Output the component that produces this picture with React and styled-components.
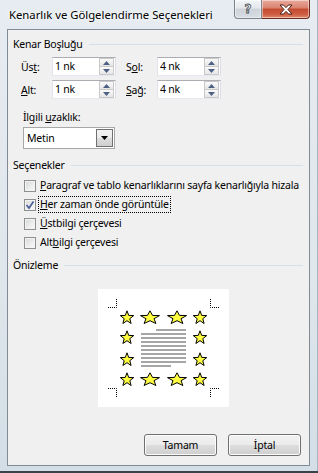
import React from "react";
import styled, { createGlobalStyle } from "styled-components";

const GlobalStyle = createGlobalStyle`
  html, body {
    margin: 0;
    padding: 0;
  }
  body {
    width: 318px;
    height: 473px;
    overflow: hidden;
    background: #3b4148;
    font-family: "Noto Sans", "Open Sans", sans-serif;
    font-size: 10.5px;
    letter-spacing: -0.2px;
    color: #000;
    white-space: nowrap;
  }
`;

const Window = styled.div`
  width: 318px;
  height: 471px;
  box-sizing: border-box;
  display: flex;
  flex-direction: column;
  background: linear-gradient(to bottom, #e6ecf1 0%, #dfe6ec 60%, #d3dee6 100%);
  border-right: 1px solid #a9b4bd;
`;

const TitleBar = styled.div`
  height: 29px;
  display: flex;
  align-items: flex-start;
  justify-content: space-between;
  flex-shrink: 0;
`;

const Title = styled.div`
  padding: 7px 0 0 9px;
  font-size: 11.3px;
  letter-spacing: 0;
  line-height: 16px;
  color: #000;
  text-shadow: 0 0 6px #fff, 0 0 3px #fff;
`;

const CaptionButtons = styled.div`
  display: flex;
  margin-right: 7px;
`;

const CaptionButton = styled.div`
  height: 19px;
  box-sizing: border-box;
  display: flex;
  align-items: center;
  justify-content: center;
  border: 1px solid ${p => (p.$close ? "#6d2a1f" : "#7b848d")};
  border-top: none;
  width: ${p => (p.$close ? "48px" : "28px")};
  border-radius: ${p => (p.$close ? "0 0 4px 0" : "0 0 0 4px")};
  border-left: ${p => (p.$close ? "none" : "1px solid #7b848d")};
  background: ${p =>
    p.$close
      ? "linear-gradient(to bottom, #e9a99b 0%, #d9826f 45%, #c34a30 50%, #cf5e44 80%, #e08c6c 100%)"
      : "linear-gradient(to bottom, #f3f5f7 0%, #e3e7eb 45%, #cdd3d9 50%, #d7dde2 100%)"};
  box-shadow: inset 0 0 0 1px rgba(255, 255, 255, 0.45);
`;

const HelpGlyph = styled.span`
  font-family: "DejaVu Sans", sans-serif;
  font-size: 12px;
  font-weight: bold;
  line-height: 12px;
  color: #f4f4f4;
  -webkit-text-stroke: 0.8px #4a4f55;
`;

const Client = styled.div`
  flex: 1;
  margin: 0 7px 5px 7px;
  border: 1px solid #808b95;
  background: #f0f0f0;
  display: flex;
  flex-direction: column;
  padding: 6px 6px 9px 5px;
  box-sizing: border-box;
`;

const GroupHeader = styled.div`
  display: flex;
  align-items: center;
  gap: 6px;
  line-height: 16px;
  margin-top: ${p => p.$top || 0}px;
  &::after {
    content: "";
    flex: 1;
    height: 1px;
    background: #d5dfe5;
  }
`;

const SpinRow = styled.div`
  display: flex;
  align-items: center;
  height: 19px;
  margin-top: ${p => p.$top}px;
  padding-left: 8px;
`;

const FieldLabel = styled.span`
  width: 31px;
  line-height: 16px;
  margin-left: ${p => p.$left || 0}px;
`;

const Spinner = styled.div`
  width: 64px;
  height: 19px;
  box-sizing: border-box;
  display: flex;
  background: #fff;
  border: 1px solid #abadb3;
  border-color: #abadb3 #dbdfe6 #e3e9ef #e2e3ea;
`;

const SpinValue = styled.div`
  flex: 1;
  padding-left: 2px;
  line-height: 17px;
`;

const SpinButtons = styled.div`
  width: 15px;
  margin: 0 1px 0 0;
  display: flex;
  flex-direction: column;
`;

const SpinButton = styled.div`
  flex: 1;
  display: flex;
  align-items: center;
  justify-content: center;
  box-sizing: border-box;
  border: 1px solid #c9c9c9;
  background: linear-gradient(to bottom, #fafafa, #e6e6e6);
  & + & {
    border-top: none;
  }
`;

const Label = styled.div`
  line-height: 16px;
  margin-top: ${p => p.$top}px;
  padding-left: 10px;
`;

const Combo = styled.div`
  width: 92px;
  height: 22px;
  box-sizing: border-box;
  margin: 2px 0 0 10px;
  display: flex;
  align-items: center;
  background: #fff;
  border: 1px solid #a8a8a8;
`;

const ComboText = styled.div`
  flex: 1;
  padding-left: 3px;
`;

const ComboButton = styled.div`
  width: 17px;
  height: 18px;
  margin-right: 1px;
  box-sizing: border-box;
  border: 1px solid #707070;
  background: linear-gradient(to bottom, #f2f2f2 0%, #ebebeb 50%, #dddddd 51%, #cfcfcf 100%);
  display: flex;
  align-items: center;
  justify-content: center;
`;

const Checks = styled.div`
  margin-top: 3px;
  padding-left: 11px;
  display: flex;
  flex-direction: column;
`;

const CheckRow = styled.div`
  height: 19px;
  display: flex;
  align-items: center;
`;

const Box = styled.div`
  width: 12px;
  height: 12px;
  flex-shrink: 0;
  box-sizing: border-box;
  border: 1px solid #8e8f8f;
  background: linear-gradient(135deg, #d4d6d9 0%, #eeeeee 60%, #f9f9f9 100%);
  box-shadow: inset 0 0 0 1px #f3f3f3;
  display: flex;
  align-items: center;
  justify-content: center;
  margin-right: 3px;
`;

const CheckLabel = styled.span`
  line-height: 15px;
  padding: 0 1px;
  outline: ${p => (p.$focus ? "1px dotted #000" : "none")};
`;

const Preview = styled.div`
  width: 131px;
  height: 118px;
  margin: 16px 0 0 85px;
  background: #fff;
`;

const Footer = styled.div`
  margin-top: auto;
  display: flex;
  justify-content: flex-end;
  gap: 11px;
  padding-right: 2px;
`;

const Button = styled.button`
  width: 73px;
  height: 22px;
  border: 1px solid #707070;
  border-radius: 3px;
  background: linear-gradient(to bottom, #f2f2f2 0%, #ebebeb 50%, #dddddd 51%, #cfcfcf 100%);
  box-shadow: inset 0 0 0 1px #fcfcfc;
  font-family: inherit;
  font-size: 10.5px;
  letter-spacing: inherit;
  color: #000;
  padding: 0;
`;

const Arrow = ({ up }) => (
  <svg width="7" height="4" viewBox="0 0 7 4">
    <path d={up ? "M0 4 L3.5 0 L7 4 Z" : "M0 0 L3.5 4 L7 0 Z"} fill="#4d6185" />
  </svg>
);

const Spin = ({ value }) => (
  <Spinner>
    <SpinValue>{value}</SpinValue>
    <SpinButtons>
      <SpinButton>
        <Arrow up />
      </SpinButton>
      <SpinButton>
        <Arrow />
      </SpinButton>
    </SpinButtons>
  </Spinner>
);

const CloseGlyph = () => (
  <svg width="14" height="11" viewBox="0 0 14 11">
    <path
      d="M1 1 L4.5 1 L7 3.6 L9.5 1 L13 1 L9 5.5 L13 10 L9.5 10 L7 7.4 L4.5 10 L1 10 L5 5.5 Z"
      fill="#fff"
      stroke="#4a1e14"
      strokeWidth="1"
      strokeLinejoin="round"
    />
  </svg>
);

const star = (cx, cy, rx, ry) => {
  const pts = [];
  for (let i = 0; i < 10; i++) {
    const a = ((-90 + i * 36) * Math.PI) / 180;
    const k = i % 2 === 0 ? 1 : 0.42;
    pts.push(`${(cx + Math.cos(a) * rx * k).toFixed(1)},${(cy + Math.sin(a) * ry * k + 0.8).toFixed(1)}`);
  }
  return pts.join(" ");
};

const stars = [
  [29, 28, 7], [52, 28, 10], [79, 28, 10], [102, 28, 7],
  [29, 48, 7], [102, 48, 7],
  [29, 70, 7], [102, 70, 7],
  [29, 90, 7], [52, 90, 10], [79, 90, 10], [102, 90, 7],
];

const PreviewArt = () => (
  <svg width="131" height="118" viewBox="0 0 131 118">
    <g stroke="#000" strokeWidth="1" strokeDasharray="1 1" fill="none">
      <path d="M10 18.5 H18.5 V10" />
      <path d="M121 18.5 H112.5 V10" />
      <path d="M10 99.5 H18.5 V108" />
      <path d="M121 99.5 H112.5 V108" />
    </g>
    {stars.map(([x, y, rx], i) => (
      <polygon key={i} points={star(x, y, rx, 7)} fill="#ffff40" stroke="#000" strokeWidth="1" />
    ))}
    <g fill="#a6a6a6">
      <rect x="58" y="40" width="30" height="2" />
      {[0, 1, 2, 3, 4, 5, 6, 7].map(i => (
        <rect key={i} x="43" y={44 + i * 4} width="45" height="2" />
      ))}
      <rect x="43" y="76" width="30" height="2" />
    </g>
  </svg>
);

const Check = () => (
  <svg width="10" height="10" viewBox="0 0 10 10">
    <path d="M1.5 5 L4 8 L8.5 1.5" fill="none" stroke="#4a5f97" strokeWidth="1.7" />
  </svg>
);

const options = [
  { pre: "", key: "P", post: "aragraf ve tablo kenarlıklarını sayfa kenarlığıyla hizala" },
  { pre: "", key: "H", post: "er zaman önde görüntüle", checked: true },
  { pre: "", key: "Ü", post: "stbilgi çerçevesi" },
  { pre: "Alt", key: "b", post: "ilgi çerçevesi" },
];

const App = () => (
  <>
    <GlobalStyle />
    <Window>
      <TitleBar>
        <Title>Kenarlık ve Gölgelendirme Seçenekleri</Title>
        <CaptionButtons>
          <CaptionButton>
            <HelpGlyph>?</HelpGlyph>
          </CaptionButton>
          <CaptionButton $close>
            <CloseGlyph />
          </CaptionButton>
        </CaptionButtons>
      </TitleBar>
      <Client>
        <GroupHeader>Kenar Boşluğu</GroupHeader>
        <SpinRow $top={5}>
          <FieldLabel>
            Üs<u>t</u>:
          </FieldLabel>
          <Spin value="1 nk" />
          <FieldLabel $left={10}>
            S<u>o</u>l:
          </FieldLabel>
          <Spin value="4 nk" />
        </SpinRow>
        <SpinRow $top={4}>
          <FieldLabel>
            <u>A</u>lt:
          </FieldLabel>
          <Spin value="1 nk" />
          <FieldLabel $left={10}>
            <u>S</u>ağ:
          </FieldLabel>
          <Spin value="4 nk" />
        </SpinRow>
        <Label $top={10}>
          İlgili <u>u</u>zaklık:
        </Label>
        <Combo>
          <ComboText>Metin</ComboText>
          <ComboButton>
            <svg width="7" height="4" viewBox="0 0 7 4">
              <path d="M0 0 L3.5 4 L7 0 Z" fill="#000" />
            </svg>
          </ComboButton>
        </Combo>
        <GroupHeader $top={8}>Seçenekler</GroupHeader>
        <Checks>
          {options.map(o => (
            <CheckRow key={o.post}>
              <Box>{o.checked ? <Check /> : null}</Box>
              <CheckLabel $focus={o.checked}>
                {o.pre}
                <u>{o.key}</u>
                {o.post}
              </CheckLabel>
            </CheckRow>
          ))}
        </Checks>
        <GroupHeader $top={5}>Önizleme</GroupHeader>
        <Preview>
          <PreviewArt />
        </Preview>
        <Footer>
          <Button>Tamam</Button>
          <Button>İptal</Button>
        </Footer>
      </Client>
    </Window>
  </>
);

export default App;
